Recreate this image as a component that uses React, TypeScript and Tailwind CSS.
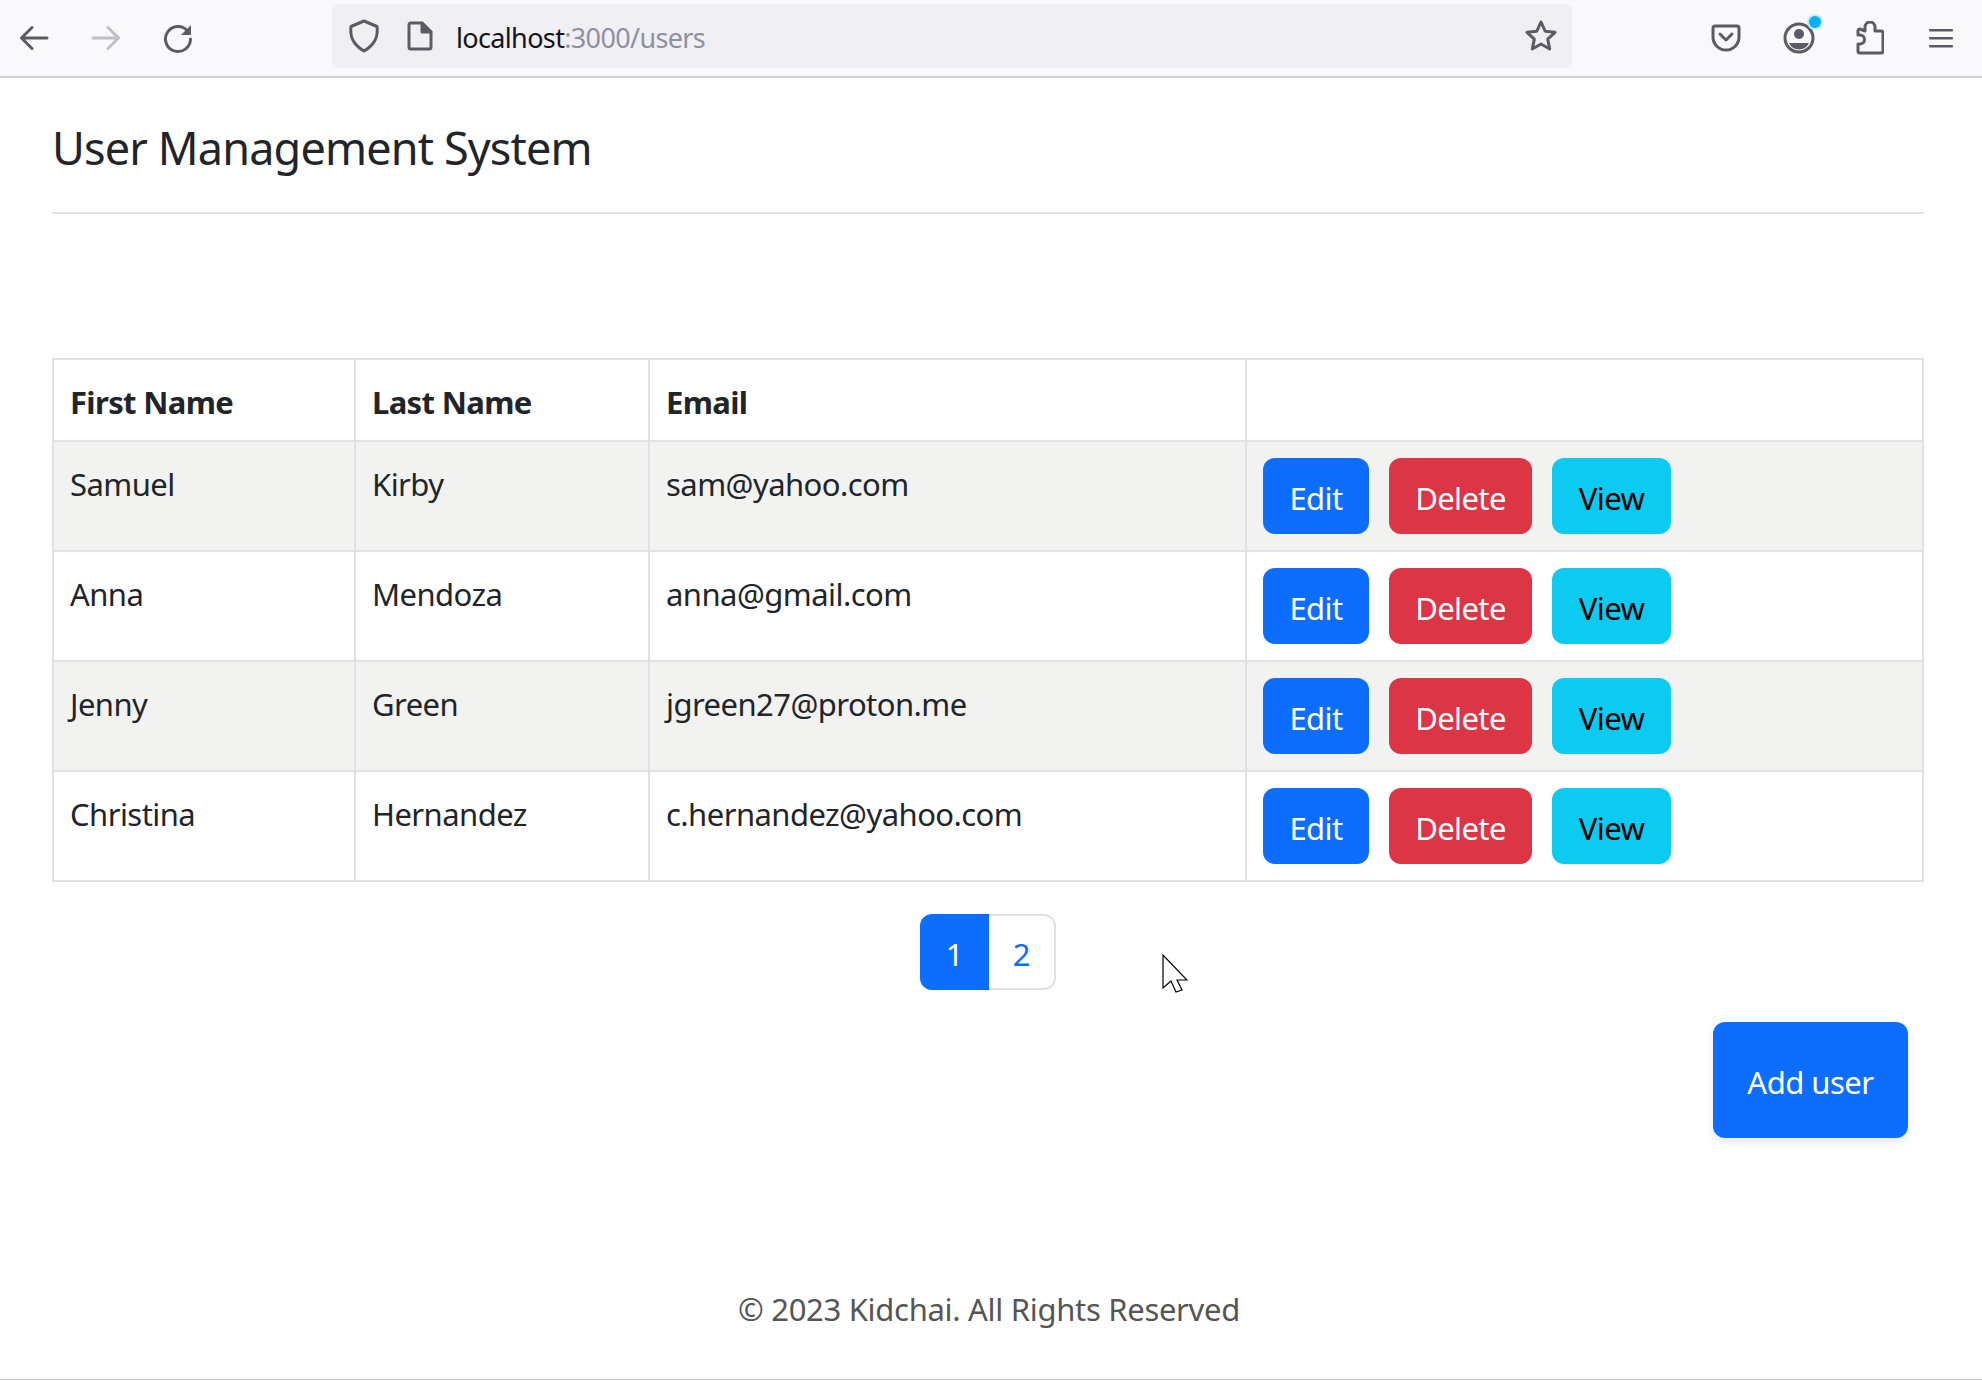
import React from 'react';

const FONT = { fontFamily: '"Noto Sans", "Open Sans", sans-serif' };

const rows = [
  { first: 'Samuel', last: 'Kirby', email: 'sam@yahoo.com' },
  { first: 'Anna', last: 'Mendoza', email: 'anna@gmail.com' },
  { first: 'Jenny', last: 'Green', email: 'jgreen27@proton.me' },
  { first: 'Christina', last: 'Hernandez', email: 'c.hernandez@yahoo.com' },
];

function BrowserBar() {
  return (
    <div className="flex h-[78px] items-start border-b-2 border-[#cfcfd8] bg-[#f9f9fb]">
      <div className="flex h-[76px] w-[332px] items-center">
        <svg className="ml-[18px]" width="32" height="32" viewBox="0 0 32 32" fill="none" stroke="#5b5b66" strokeWidth="3" strokeLinecap="round" strokeLinejoin="round">
          <path d="M29 16H4M14 5.500 3.500 16 14 26.500" />
        </svg>
        <svg className="ml-[40px]" width="32" height="32" viewBox="0 0 32 32" fill="none" stroke="#bfbfc5" strokeWidth="3" strokeLinecap="round" strokeLinejoin="round">
          <path d="M3 16h25M18 5.500 28.500 16 18 26.500" />
        </svg>
        <svg className="ml-[40px]" width="32" height="32" viewBox="0 0 32 32" fill="none">
          <path d="M26 9.500A12.500 12.500 0 1 0 28.500 17" stroke="#5b5b66" strokeWidth="3" strokeLinecap="round" />
          <path d="M29 3v10H19z" fill="#5b5b66" />
        </svg>
      </div>
      <div className="mt-1 flex h-[64px] w-[1240px] items-center rounded-lg bg-[#f0f0f4]">
        <svg className="ml-[16px]" width="32" height="34" viewBox="0 0 32 34" fill="none" stroke="#5b5b66" strokeWidth="3" strokeLinejoin="round">
          <path d="M16 2 29 7.500c1 8 0 17-13 24.500C3 24.500 2 15.500 3 7.500z" />
        </svg>
        <svg className="ml-[27px]" width="26" height="30" viewBox="0 0 26 30" fill="none" stroke="#5b5b66" strokeWidth="3" strokeLinejoin="round">
          <path d="M4 2h11l9 9v15a2 2 0 0 1-2 2H4a2 2 0 0 1-2-2V4a2 2 0 0 1 2-2z" />
          <path d="M15 2v9h9z" fill="#5b5b66" />
        </svg>
        <div className="ml-[23px] pt-[5px] text-[27px] tracking-[-0.65px]" style={FONT}>
          <span className="text-[#15141a]">localhost</span>
          <span className="text-[#8f8f9d]">:3000/users</span>
        </div>
        <svg className="ml-auto mr-[14px]" width="34" height="34" viewBox="0 0 34 34" fill="none" stroke="#5b5b66" strokeWidth="3" strokeLinejoin="round">
          <path d="m17 3 4.200 9.200 9.800 1.100-7.300 6.800 2 9.900-8.700-5-8.700 5 2-9.900L3 13.300l9.800-1.100z" />
        </svg>
      </div>
      <div className="flex h-[76px] flex-1 items-center">
        <svg className="ml-[139px]" width="30" height="28" viewBox="0 0 30 28" fill="none" stroke="#5b5b66" strokeWidth="3" strokeLinejoin="round" strokeLinecap="round">
          <path d="M4 2h22a2 2 0 0 1 2 2v9a13 13 0 0 1-26 0V4a2 2 0 0 1 2-2z" />
          <path d="m9 10 6 6 6-6" />
        </svg>
        <div className="relative ml-[42px] h-[32px] w-[32px]">
          <svg width="32" height="32" viewBox="0 0 32 32" fill="none">
            <circle cx="16" cy="16" r="14" stroke="#5b5b66" strokeWidth="3" />
            <circle cx="16" cy="12" r="5" fill="#5b5b66" />
            <path d="M6 21h20a11 11 0 0 1-20 0z" fill="#5b5b66" />
          </svg>
          <div className="absolute right-[-6px] top-[-6px] h-[12px] w-[12px] rounded-full bg-[#00b3f4] ring-2 ring-[#c6ecfb]" />
        </div>
        <svg className="ml-[41px]" width="28" height="34" viewBox="0 0 28 34" fill="none" stroke="#5b5b66" strokeWidth="3" strokeLinejoin="round">
          <path d="M9 10V6a5 5 0 0 1 10 0v4h6a2 2 0 0 1 2 2v18a2 2 0 0 1-2 2H4a2 2 0 0 1-2-2v-7h2a4.500 4.500 0 0 0 0-9H2v-4a2 2 0 0 1 2-2z" />
        </svg>
        <svg className="ml-[45px]" width="24" height="20" viewBox="0 0 24 20" fill="#5b5b66">
          <rect y="1" width="24" height="2.600" rx="1" />
          <rect y="9" width="24" height="2.600" rx="1" />
          <rect y="17" width="24" height="2.600" rx="1" />
        </svg>
      </div>
    </div>
  );
}

function RowButton({ label, className }: { label: string; className: string }) {
  return (
    <button className={`flex h-[76px] items-center justify-center rounded-xl pt-1 text-[31px] tracking-[-0.6px] ${className}`}>
      {label}
    </button>
  );
}

export default function App() {
  return (
    <div className="relative h-[1380px] overflow-hidden bg-white text-[#212529]" style={FONT}>
      <BrowserBar />
      <div className="pl-[52px] pr-[58px]">
        <h4 className="pt-[37px] pb-[31px] text-[45px] leading-[66px] tracking-[-0.85px]">User Management System</h4>
        <hr className="border-t-2 border-[#dee2e6]" />
      </div>

      <div className="mt-[144px] pl-[52px] pr-[58px]">
        <table className="w-full table-fixed border-collapse border-2 border-[#dee2e6] text-[31px] tracking-[-0.55px]">
          <colgroup>
            <col className="w-[302px]" />
            <col className="w-[294px]" />
            <col className="w-[597px]" />
            <col />
          </colgroup>
          <thead>
            <tr className="h-[82px]">
              <th className="border-2 border-[#dee2e6] px-4 pt-[5px] text-left font-bold tracking-[-0.65px]">First Name</th>
              <th className="border-2 border-[#dee2e6] px-4 pt-[5px] text-left font-bold tracking-[-0.65px]">Last Name</th>
              <th className="border-2 border-[#dee2e6] px-4 pt-[5px] text-left font-bold tracking-[-0.65px]">Email</th>
              <th className="border-2 border-[#dee2e6]" />
            </tr>
          </thead>
          <tbody>
            {rows.map((row, i) => (
              <tr key={row.email} className={`h-[110px] ${i % 2 === 0 ? 'bg-[#f2f2f0]' : 'bg-white'}`}>
                <td className="border-2 border-[#dee2e6] px-4 pt-[20px] align-top leading-[44px]">{row.first}</td>
                <td className="border-2 border-[#dee2e6] px-4 pt-[20px] align-top leading-[44px]">{row.last}</td>
                <td className="border-2 border-[#dee2e6] px-4 pt-[20px] align-top leading-[44px]">{row.email}</td>
                <td className="border-2 border-[#dee2e6] px-4">
                  <div className="flex gap-5">
                    <RowButton label="Edit" className="w-[106px] bg-[#0d6efd] text-white" />
                    <RowButton label="Delete" className="w-[143px] bg-[#dc3545] text-white" />
                    <RowButton label="View" className="w-[119px] bg-[#0dcaf0] text-black" />
                  </div>
                </td>
              </tr>
            ))}
          </tbody>
        </table>

        <div className="mt-8 flex justify-center">
          <div className="flex h-[76px] text-[31px]">
            <div className="flex w-[69px] items-center justify-center rounded-l-xl bg-[#0d6efd] pt-1 text-white">1</div>
            <div className="flex w-[67px] items-center justify-center rounded-r-xl border-2 border-l-0 border-[#dee2e6] pt-1 text-[#0d6efd]">2</div>
          </div>
        </div>

        <div className="mt-8 flex justify-end pr-4">
          <button className="h-[116px] w-[195px] rounded-xl bg-[#0d6efd] pt-1 text-[31px] tracking-[-0.5px] text-white shadow-[0_4px_8px_rgba(0,0,0,0.1)]">
            Add user
          </button>
        </div>
      </div>

      <p className="mt-[148px] pr-[4px] text-center text-[31px] tracking-[-0.3px] text-[#555555]">© 2023 Kidchai. All Rights Reserved</p>

      <svg className="absolute left-[1162px] top-[954px]" width="26" height="41" viewBox="0 0 26 41" fill="white" stroke="black" strokeWidth="1.200">
        <path d="M1 1v33l8-7 5 11 6-2-5-10h10z" />
      </svg>
      <div className="absolute bottom-0 left-0 right-0 h-px bg-[#c8c8c8]" />
    </div>
  );
}
